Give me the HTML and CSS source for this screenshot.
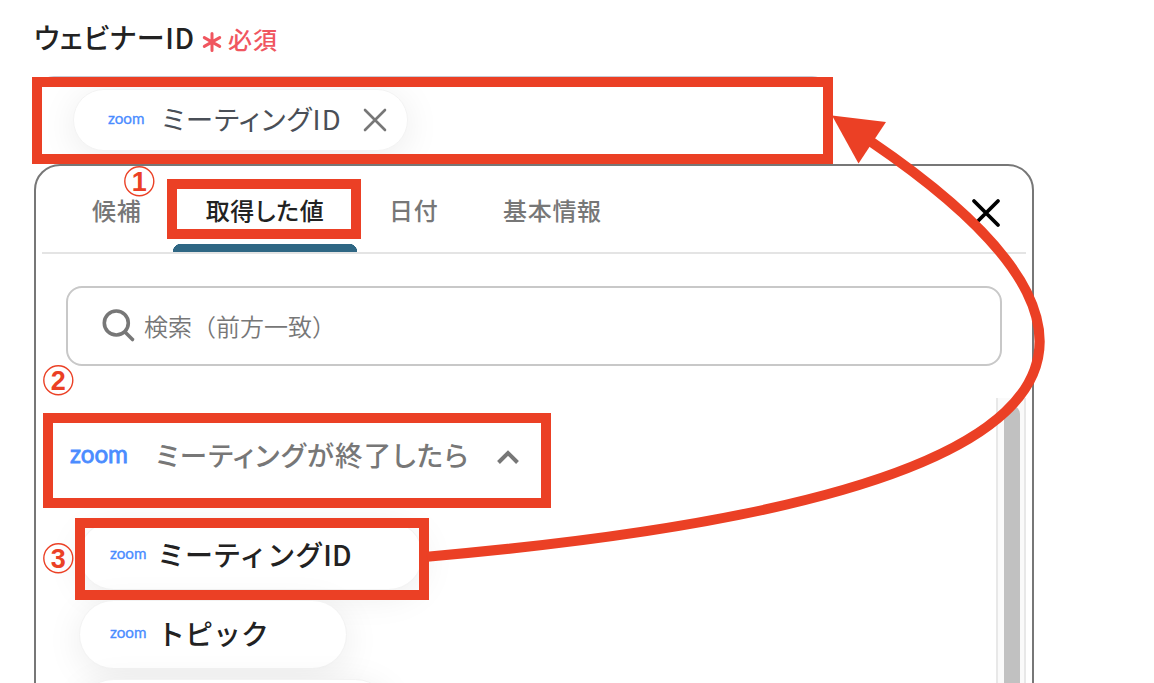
FILE: index.html
```
<!DOCTYPE html>
<html lang="ja">
<head>
    <meta charset="UTF-8">
    <meta name="viewport" content="width=device-width, initial-scale=1.0">
    <title>ウェビナーID</title>
    <link rel="stylesheet" href="styles.css">
</head>
<body>
    <div class="page">
        <div class="field-label">
            <span class="label-text">ウェビナーID</span>
            <svg class="asterisk" width="18" height="20" viewBox="0 0 18 20">
                <path d="M9 1.500v17M1.300 5.600l15.400 8.800M16.700 5.600L1.300 14.400"/>
            </svg>
            <span class="required">必須</span>
        </div>
        <div class="field">
            <div class="chip chip-selected">
                <svg class="zoom-small" width="37" height="24"><text x="0" y="16" textLength="36.500" lengthAdjust="spacingAndGlyphs">zoom</text></svg>
                <span class="chip-value">ミーティングID</span>
                <svg class="chip-remove" width="24" height="24" viewBox="0 0 24 24"><path d="M2 2l20 20M22 2L2 22"/></svg>
            </div>
        </div>

        <div class="panel">
            <div class="tabs">
                <div class="tab tab-first">候補</div>
                <div class="tab tab-active">取得した値</div>
                <div class="tab tab-date">日付</div>
                <div class="tab tab-info">基本情報</div>
                <svg class="close" width="30" height="30" viewBox="0 0 30 30"><path d="M3 3l24 24M27 3L3 27"/></svg>
            </div>
            <div class="search">
                <svg class="search-icon" width="34" height="34" viewBox="0 0 34 34">
                    <circle cx="15.300" cy="14" r="12"/>
                    <path d="M24 23l7.500 7.500"/>
                </svg>
                <span class="placeholder">検索（前方一致）</span>
            </div>
            <div class="results">
                <div class="list">
                    <div class="group">
                        <svg class="zoom-large" width="58" height="36"><text x="0" y="24.500" textLength="58" lengthAdjust="spacingAndGlyphs">zoom</text></svg>
                        <span class="group-name">ミーティングが終了したら</span>
                        <svg class="chevron" width="24" height="16" viewBox="0 0 24 16"><path d="M2.500 12.500L12 3l9.500 9.500"/></svg>
                    </div>
                    <div class="chip chip-id">
                        <svg class="zoom-small" width="37" height="24"><text x="0" y="15" textLength="36.500" lengthAdjust="spacingAndGlyphs">zoom</text></svg>
                        <span class="chip-name">ミーティングID</span>
                    </div>
                    <div class="chip chip-topic">
                        <svg class="zoom-small" width="37" height="24"><text x="0" y="15" textLength="36.500" lengthAdjust="spacingAndGlyphs">zoom</text></svg>
                        <span class="chip-name">トピック</span>
                    </div>
                    <div class="chip chip-next"></div>
                </div>
                <div class="scrollbar"><div class="thumb"></div></div>
            </div>
        </div>
    </div>

    <!-- Step markers, frames and arrow -->
    <svg class="notes" width="1154" height="683" viewBox="0 0 1154 683">
        <g class="frames">
            <rect x="37" y="82" width="791" height="77"/>
            <rect x="172" y="184" width="184" height="50"/>
            <rect x="48" y="418" width="498" height="85"/>
            <rect x="80" y="523" width="344" height="72"/>
            <path d="M427 556.700Q1362 475 870 141"/>
        </g>
        <path class="arrow-head" d="M832 115.500L886 122L858.500 163.500Z"/>
        <g class="steps">
            <circle cx="139.300" cy="181.300" r="14.500"/>
            <circle cx="58.300" cy="380.200" r="14.500"/>
            <circle cx="58.300" cy="558.200" r="14.500"/>
            <text x="139.300" y="191">1</text>
            <text x="58.300" y="390">2</text>
            <text x="58.300" y="568">3</text>
        </g>
    </svg>
</body>
</html>
```
FILE: styles.css
```
* {
    box-sizing: border-box;
}
body {
    margin: 0;
    height: 683px;
    overflow: hidden;
    position: relative;
    background-color: #fff;
    color: #222;
    font-family: "Noto Sans CJK JP", sans-serif;
    font-feature-settings: "palt";
}
svg {
    display: block;
    flex: none;
    fill: none;
    overflow: visible;
}
span, .tab {
    white-space: nowrap;
}
.page {
    height: 683px;
    padding: 14px 0 0 34px;
    overflow: hidden;
}
.field-label {
    display: flex;
    align-items: center;
    height: 46px;
}
.label-text {
    width: 169px;
    font-size: 28px;
    font-weight: 500;
    letter-spacing: 0.6px;
}
.asterisk {
    margin-top: 9px;
    stroke: #f0565f;
    stroke-width: 3;
    stroke-linecap: round;
}
.required {
    margin: 2px 0 0 7px;
    color: #f0565f;
    font-size: 24px;
    font-weight: 500;
    letter-spacing: 1px;
}
.field {
    width: 798px;
    height: 88px;
    margin-top: 16px;
    padding: 11px 0 0 37px;
    border: 2px solid #c8cbd6;
    border-bottom: none;
    border-radius: 20px 20px 0 0;
    overflow: hidden;
}
.chip {
    display: flex;
    align-items: center;
    background-color: #fff;
    border: 1px solid #f3f3f3;
    border-radius: 35px;
    box-shadow: 0 6px 36px rgba(0, 0, 0, 0.08);
}
.chip-selected {
    width: 335px;
    height: 62px;
    padding-left: 34px;
}
.zoom-small text {
    fill: #4a8cff;
    font: 400 15.5px Lato, sans-serif;
    stroke: #4a8cff;
    stroke-width: 0.3;
}
.zoom-large text {
    fill: #4a8cff;
    font: 400 25px Lato, sans-serif;
    stroke: #4a8cff;
    stroke-width: 0.8;
}
.chip-value {
    width: 183px;
    margin: -4px 0 0 17px;
    color: #4a4f57;
    font-size: 27.5px;
    letter-spacing: 1.15px;
}
.chip-remove {
    margin-left: 18px;
    stroke: #777;
    stroke-width: 2.6;
    stroke-linecap: round;
}
.panel {
    position: relative;
    width: 1000px;
    height: 560px;
    background-color: #fff;
    border: 2px solid #777;
    border-radius: 26px;
}
.tabs {
    display: flex;
    height: 88px;
    margin: 0 6px;
    border-bottom: 2px solid #e4e4e4;
    color: #777;
    font-size: 24px;
    font-weight: 500;
    letter-spacing: 0.7px;
    line-height: 88px;
}
.tab-first {
    width: 131px;
    padding-left: 50px;
}
.tab-active {
    width: 184px;
    border-bottom: 8px solid transparent;
    background: radial-gradient(circle at 8px 8px, #2f6784 8px, transparent 8.5px) 0 100% / 8px 8px no-repeat border-box,
        radial-gradient(circle at 0 8px, #2f6784 8px, transparent 8.5px) 100% 100% / 8px 8px no-repeat border-box,
        linear-gradient(#2f6784, #2f6784) 50% 100% / 168px 8px no-repeat border-box;
    color: #222;
    text-align: center;
}
.tab-date {
    width: 112px;
    padding-left: 32px;
}
.tab-info {
    width: 130px;
    margin-left: 34px;
}
.close {
    margin: 32px 25px 0 auto;
    stroke: #000;
    stroke-width: 3.8;
    stroke-linecap: round;
}
.search {
    display: flex;
    align-items: center;
    height: 80px;
    margin: 32px 30px 0;
    padding-left: 33px;
    border: 2px solid #c8c8c8;
    border-radius: 16px;
}
.search-icon {
    stroke: #777;
    stroke-width: 3.6;
    stroke-linecap: round;
}
.placeholder {
    margin: -2px 0 0 9px;
    color: #777;
    font-size: 24px;
    font-weight: 350;
    font-feature-settings: normal;
}
.results {
    display: flex;
    height: 285px;
    margin: 32px 6px 0;
    overflow: hidden;
}
.list {
    width: 954px;
    padding-left: 28px;
}
.group {
    display: flex;
    align-items: center;
    height: 116px;
}
.group-name {
    width: 314px;
    margin: -4px 0 0 28px;
    color: #777;
    font-size: 27.5px;
    font-weight: 500;
    letter-spacing: 1.2px;
}
.chevron {
    margin: 3px 0 0 26px;
    stroke: #777;
    stroke-width: 4;
}
.list .chip {
    height: 69px;
    margin: 7px 0 10px 9px;
    padding-left: 30px;
}
.chip-id {
    width: 344px;
}
.chip-topic {
    width: 268px;
}
.chip-next {
    width: 311px;
}
.chip-name {
    margin: -4px 0 0 10px;
    font-size: 28px;
    font-weight: 500;
    font-feature-settings: normal;
}
.scrollbar {
    width: 30px;
    padding: 8px 4px 0 6px;
    background-color: #fafafa;
    border: solid #e8e8e8;
    border-width: 0 2px;
}
.thumb {
    width: 16px;
    height: 400px;
    background-color: #c1c1c1;
    border-radius: 8px;
}
.notes {
    position: absolute;
    left: 0;
    top: 0;
}
.frames {
    stroke: #eb4025;
    stroke-width: 10;
}
.arrow-head {
    fill: #eb4025;
}
.steps circle {
    stroke: #eb4025;
    stroke-width: 1.4;
}
.steps text {
    fill: #eb4025;
    font: 700 27px "Liberation Sans", sans-serif;
    text-anchor: middle;
}
```
